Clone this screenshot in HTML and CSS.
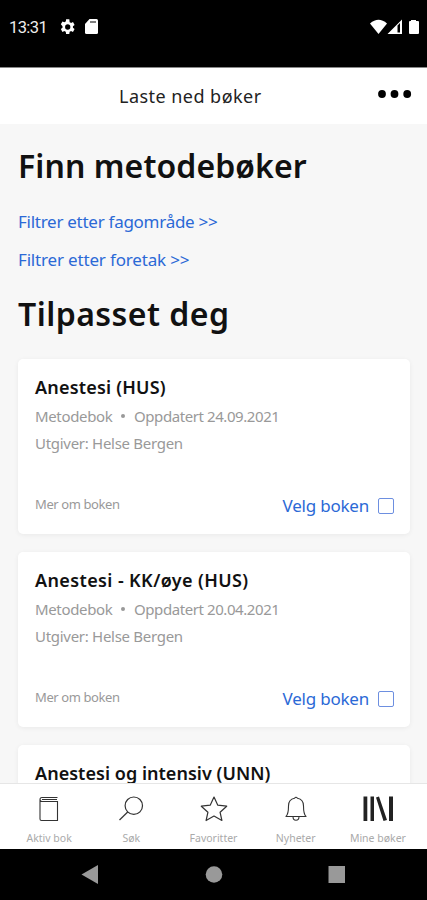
FILE: index.html
```html
<!DOCTYPE html>
<html lang="no">
<head>
<meta charset="utf-8">
<title>Laste ned bøker</title>
<link rel="stylesheet" href="styles.css">
</head>
<body>
<div class="phone">
  <div class="status">
    <span class="clock">13:31</span>
    <svg class="gear" width="16" height="16" viewBox="2 2 20 20"><path fill="#fff" fill-rule="evenodd" d="M19.4 13a7.500 7.500 0 0 0 0-2l2.100-1.650-2-3.460-2.480 1a7.300 7.300 0 0 0-1.700-.98L14.900 2.400h-4l-.4 2.600a7.300 7.300 0 0 0-1.700.98l-2.480-1-2 3.460L6.400 11a7.500 7.500 0 0 0 0 2l-2.100 1.650 2 3.460 2.480-1c.5.400 1.100.7 1.700.98l.4 2.600h4l.4-2.600c.6-.28 1.200-.6 1.700-.98l2.480 1 2-3.460zM12.900 15.300a3.300 3.300 0 1 1 0-6.600 3.300 3.300 0 0 1 0 6.600z"/></svg>
    <svg class="sd" width="13" height="15" viewBox="0 0 13 15"><path fill="#fff" d="M4.500 0H11.500Q13 0 13 1.500V13.500Q13 15 11.500 15H1.500Q0 15 0 13.500V5z"/><path stroke="#555" stroke-width="1.500" d="M5 3h6"/></svg>
    <svg class="signals" width="50" height="16" viewBox="0 0 50 16"><path fill="#fff" d="M0 4.500Q8.500-3 17 4.500L8.500 15z"/><path fill="#fff" fill-rule="evenodd" d="M17.500 15 32 .5V15zM27.500 6.500V13.500H30V4z"/><path fill="#fff" d="M41 1h5v1h2q1 0 1 1v11q0 1-1 1h-8q-1 0-1-1V3q0-1 1-1h1z"/></svg>
  </div>
  <header class="topbar">
    <h1 class="title">Laste ned bøker</h1>
    <svg class="more" width="34" height="8" viewBox="0 0 34 8"><circle cx="4" cy="4" r="3.900"/><circle cx="16.500" cy="4" r="3.900"/><circle cx="29.200" cy="4" r="3.900"/></svg>
  </header>
  <main class="content">
    <h2 class="heading find">Finn metodebøker</h2>
    <a class="filter area">Filtrer etter fagområde &gt;&gt;</a>
    <a class="filter trust">Filtrer etter foretak &gt;&gt;</a>
    <h2 class="heading adapted">Tilpasset deg</h2>
    <article class="card">
      <h3 class="name n1">Anestesi (HUS)</h3>
      <p class="meta"><span class="kind">Metodebok</span><span class="dot"></span><span class="updated">Oppdatert 24.09.2021</span></p>
      <p class="publisher"><span>Utgiver: Helse Bergen</span></p>
      <div class="actions"><span class="about">Mer om boken</span><span class="choose">Velg boken</span><span class="box"></span></div>
    </article>
    <article class="card">
      <h3 class="name n2">Anestesi - KK/øye (HUS)</h3>
      <p class="meta"><span class="kind">Metodebok</span><span class="dot"></span><span class="updated">Oppdatert 20.04.2021</span></p>
      <p class="publisher"><span>Utgiver: Helse Bergen</span></p>
      <div class="actions"><span class="about">Mer om boken</span><span class="choose">Velg boken</span><span class="box"></span></div>
    </article>
    <article class="card">
      <h3 class="name n3">Anestesi og intensiv (UNN)</h3>
    </article>
  </main>
  <nav class="tabs">
    <div class="tab"><svg width="32" height="28" viewBox="0 0 32 28" fill="none" stroke="#333"><path d="M7 4v19q0 1.500 1.500 1.500h16V5.500H9Q7 5.500 7 3.500 7 1.500 9 1.500H24.500M9 3.500h15" stroke-width="1.100"/></svg><span>Aktiv bok</span></div>
    <div class="tab"><svg width="32" height="28" viewBox="0 0 32 28" fill="none" stroke="#333" stroke-width="1.200"><circle cx="18.800" cy="9.700" r="8.700"/><path d="M12.700 16 4.500 24"/></svg><span>Søk</span></div>
    <div class="tab"><svg width="32" height="28" viewBox="0 0 32 28" fill="none" stroke="#333" stroke-width="1.200" stroke-linejoin="round"><path d="M16 1 19.800 9.200 28.700 10.200 22.100 16.300 23.900 24.500 16 20.100 8.100 24.500 9.900 16.300 3.300 10.200 12.200 9.200z"/></svg><span>Favoritter</span></div>
    <div class="tab"><svg width="32" height="28" viewBox="0 0 32 28" fill="none" stroke="#333" stroke-width="1.100" stroke-linejoin="round"><path d="M14.500 2.300Q16 .2 17.500 2.300C21.500 3 23.500 6 23.500 10 23.500 16 24 18.500 26 20.500H6C8 18.500 8.500 16 8.500 10 8.500 6 10.500 3 14.500 2.300zM13 20.500Q13 24.300 16 24.300T19 20.500"/></svg><span>Nyheter</span></div>
    <div class="tab"><svg width="32" height="28" viewBox="0 0 32 28" fill="#222"><path d="M1.500.5h3.800V25H1.500zM8.500.5h3.500V25H8.500zM14 1.500 17 .5 25 24 21.500 25zM27 .5H31V25H27z"/></svg><span>Mine bøker</span></div>
  </nav>
  <div class="system">
    <svg width="427" height="51" viewBox="0 0 427 51" fill="#999"><path d="M81.500 25.500 98 16V35z"/><circle cx="214" cy="25.500" r="8.300"/><path d="M328.500 17h16.500v17h-16.500z"/></svg>
  </div>
</div>
</body>
</html>
```
FILE: styles.css
```css
* { box-sizing: border-box; margin: 0; padding: 0; }
body { background: #000; font-family: "Noto Sans", sans-serif; }
.phone { width: 427px; height: 900px; display: flex; flex-direction: column; overflow: hidden; }
span, h1, h2, h3, a { white-space: nowrap; }

.status { height: 67px; flex: none; background: #000; display: flex; align-items: flex-start; padding: 19px 7px 0 9px; color: #eee; }
.clock { width: 50px; font: 400 16.500px/18px Roboto, sans-serif; letter-spacing: -.6px; }
.sd { margin-left: 10px; }
.signals { margin-left: auto; }

.topbar { height: 57px; flex: none; background: #fff; border-top: 1px solid #888; display: flex; align-items: center; justify-content: space-between; padding: 0 15px 2px 119px; }
.title { font-size: 18px; font-weight: 400; line-height: 26px; letter-spacing: .46px; color: #222; padding-top: 2px; }
.more { margin-top: -2px; }

.content { flex: 1; min-height: 0; overflow: hidden; background: #f7f7f7; padding: 20px 17px 0 18px; display: flex; flex-direction: column; align-items: stretch; }
.heading { flex: none; font-size: 32px; line-height: 44px; font-weight: 600; color: #111; }
.find { letter-spacing: .08px; }
.filter { flex: none; font-size: 17px; line-height: 24px; color: #2b69d6; }
.area { margin-top: 22px; letter-spacing: -.27px; }
.trust { margin-top: 14px; letter-spacing: -.17px; }
.adapted { margin-top: 20px; letter-spacing: .46px; }

.card { flex: none; height: 175px; margin-bottom: 18px; padding: 15px 16px 0 17px; background: #fff; border-radius: 5px; box-shadow: 0 1px 5px rgba(0,0,0,.06); }
.adapted + .card { margin-top: 23px; }
.name { font-size: 18px; line-height: 26px; font-weight: 600; color: #111; }
.n1 { letter-spacing: .2px; }
.n2 { letter-spacing: .38px; }
.n3 { letter-spacing: .03px; }
.meta { display: flex; align-items: center; margin-top: 4px; font-size: 15px; line-height: 24px; color: #999; }
.kind { width: 86px; letter-spacing: -.35px; }
.dot { width: 4px; height: 4px; border-radius: 50%; background: #999; margin-right: 9px; }
.updated { letter-spacing: -.42px; }
.publisher { font-size: 15px; line-height: 24px; margin-top: 3px; color: #999; letter-spacing: -.29px; }
.actions { display: flex; align-items: center; margin-top: 38px; height: 26px; }
.about { font-size: 13px; color: #999; margin-top: -5px; margin-right: auto; letter-spacing: -.4px; }
.choose { font-size: 17px; line-height: 26px; color: #2b69d6; letter-spacing: -.22px; }
.box { width: 16px; height: 16px; border: 1.500px solid #6d8fe0; border-radius: 2px; margin-left: 9px; }

.tabs { height: 66px; flex: none; background: #fff; border-top: 1px solid #e6e6e6; display: flex; padding: 12px 8px 0; }
.tab { flex: 1; display: flex; flex-direction: column; align-items: center; font-size: 10.500px; line-height: 14px; color: #aaa; }
.tab span { margin-top: 7px; }
.system { flex: none; height: 51px; background: #000; }
.system svg { display: block; }
```
